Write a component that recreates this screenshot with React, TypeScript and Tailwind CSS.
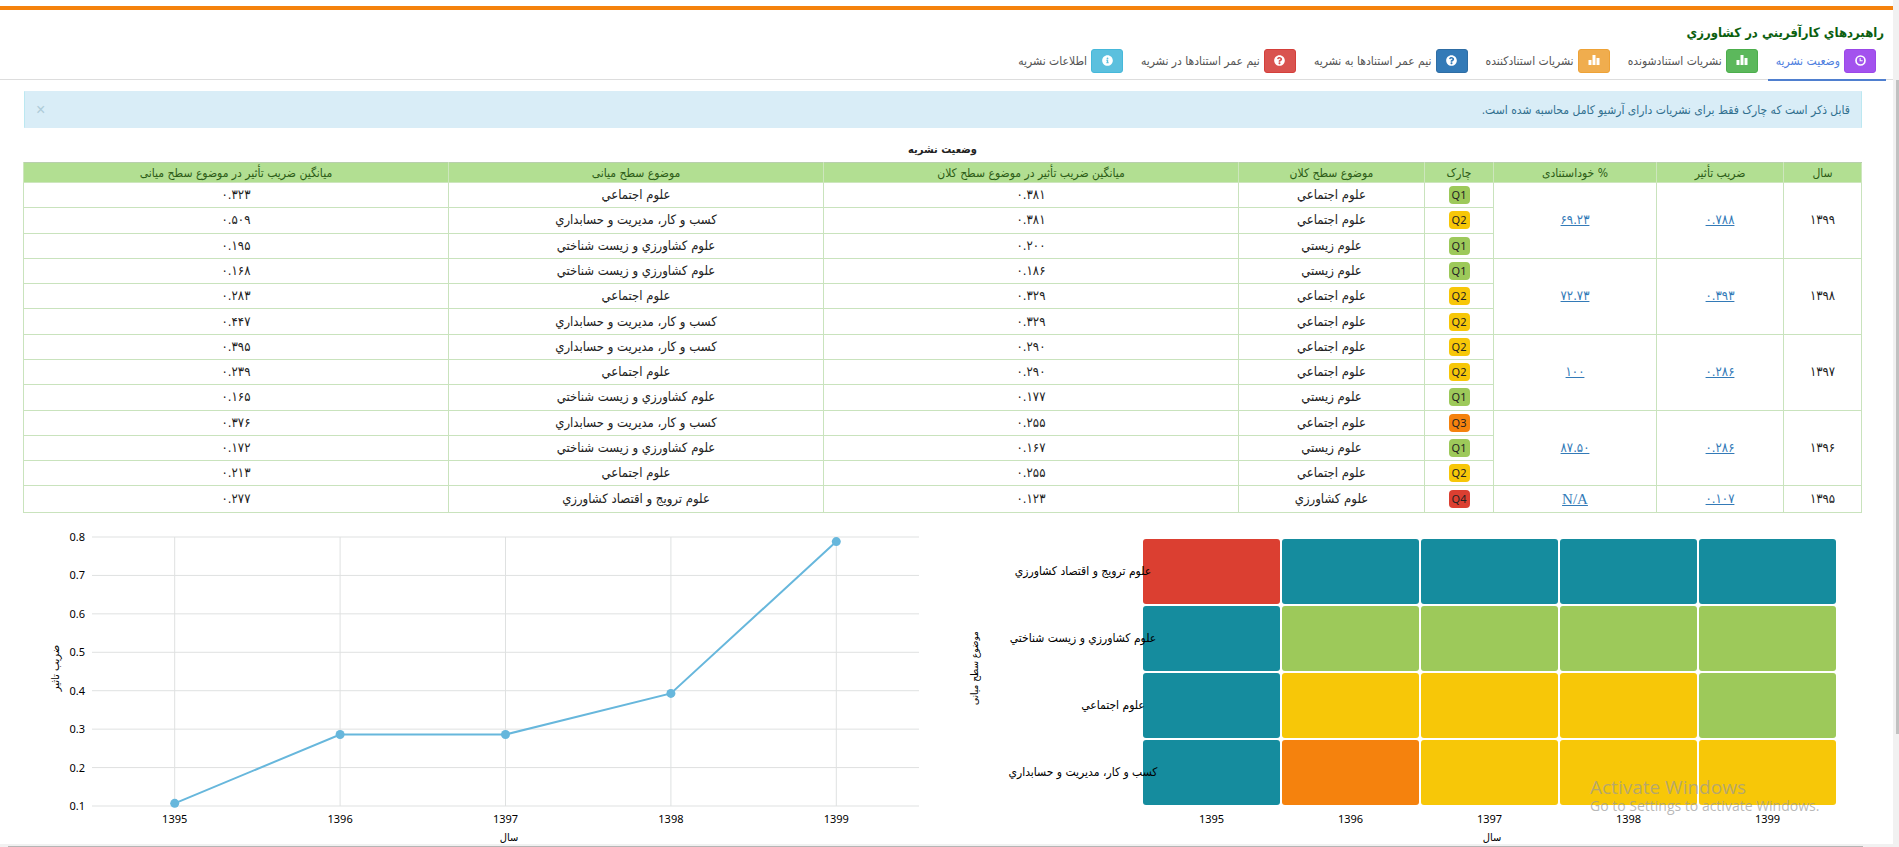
import type { ReactNode } from 'react';
import { clsx } from 'clsx';
import { FaInfoCircle, FaQuestionCircle } from 'react-icons/fa';

type Quartile = 'Q1' | 'Q2' | 'Q3' | 'Q4';

type Subject = {
  quartile: Quartile;
  macro: string;
  macroMean: string;
  mid: string;
  midMean: string;
};

type YearGroup = {
  year: string;
  impact: string;
  selfCitation: string;
  subjects: Subject[];
};

type Tab = {
  label: string;
  icon: ReactNode;
  color: string;
  active?: boolean;
};

const SOCIAL = 'علوم اجتماعي';
const BIO = 'علوم زيستي';
const AGRI = 'علوم کشاورزي';
const BUSINESS = 'کسب و کار، مديريت و حسابداري';
const AGRI_BIO = 'علوم کشاورزي و زيست شناختي';
const EXTENSION = 'علوم ترويج و اقتصاد کشاورزي';

const years: YearGroup[] = [
  {
    year: '۱۳۹۹',
    impact: '۰.۷۸۸',
    selfCitation: '۶۹.۲۳',
    subjects: [
      { quartile: 'Q1', macro: SOCIAL, macroMean: '۰.۳۸۱', mid: SOCIAL, midMean: '۰.۳۲۳' },
      { quartile: 'Q2', macro: SOCIAL, macroMean: '۰.۳۸۱', mid: BUSINESS, midMean: '۰.۵۰۹' },
      { quartile: 'Q1', macro: BIO, macroMean: '۰.۲۰۰', mid: AGRI_BIO, midMean: '۰.۱۹۵' },
    ],
  },
  {
    year: '۱۳۹۸',
    impact: '۰.۳۹۳',
    selfCitation: '۷۲.۷۳',
    subjects: [
      { quartile: 'Q1', macro: BIO, macroMean: '۰.۱۸۶', mid: AGRI_BIO, midMean: '۰.۱۶۸' },
      { quartile: 'Q2', macro: SOCIAL, macroMean: '۰.۳۲۹', mid: SOCIAL, midMean: '۰.۲۸۳' },
      { quartile: 'Q2', macro: SOCIAL, macroMean: '۰.۳۲۹', mid: BUSINESS, midMean: '۰.۴۴۷' },
    ],
  },
  {
    year: '۱۳۹۷',
    impact: '۰.۲۸۶',
    selfCitation: '۱۰۰',
    subjects: [
      { quartile: 'Q2', macro: SOCIAL, macroMean: '۰.۲۹۰', mid: BUSINESS, midMean: '۰.۳۹۵' },
      { quartile: 'Q2', macro: SOCIAL, macroMean: '۰.۲۹۰', mid: SOCIAL, midMean: '۰.۲۳۹' },
      { quartile: 'Q1', macro: BIO, macroMean: '۰.۱۷۷', mid: AGRI_BIO, midMean: '۰.۱۶۵' },
    ],
  },
  {
    year: '۱۳۹۶',
    impact: '۰.۲۸۶',
    selfCitation: '۸۷.۵۰',
    subjects: [
      { quartile: 'Q3', macro: SOCIAL, macroMean: '۰.۲۵۵', mid: BUSINESS, midMean: '۰.۳۷۶' },
      { quartile: 'Q1', macro: BIO, macroMean: '۰.۱۶۷', mid: AGRI_BIO, midMean: '۰.۱۷۲' },
      { quartile: 'Q2', macro: SOCIAL, macroMean: '۰.۲۵۵', mid: SOCIAL, midMean: '۰.۲۱۳' },
    ],
  },
  {
    year: '۱۳۹۵',
    impact: '۰.۱۰۷',
    selfCitation: 'N/A',
    subjects: [
      { quartile: 'Q4', macro: AGRI, macroMean: '۰.۱۲۳', mid: EXTENSION, midMean: '۰.۲۷۷' },
    ],
  },
];

const columns = [
  { label: 'سال', width: 'w-[78px]' },
  { label: 'ضریب تأثیر', width: 'w-[127px]' },
  { label: '% خوداستنادی', width: 'w-[163px]' },
  { label: 'چارک', width: 'w-[69px]' },
  { label: 'موضوع سطح کلان', width: 'w-[186px]' },
  { label: 'میانگین ضریب تأثیر در موضوع سطح کلان', width: 'w-[415px]' },
  { label: 'موضوع سطح میانی', width: 'w-[375px]' },
  { label: 'میانگین ضریب تأثیر در موضوع سطح میانی', width: 'w-[425px]' },
];

const badgeColors: Record<Quartile, string> = {
  Q1: 'bg-[#9dc95a]',
  Q2: 'bg-[#f7c708]',
  Q3: 'bg-[#f5820d]',
  Q4: 'bg-[#db3f31]',
};

const chartYears = ['1395', '1396', '1397', '1398', '1399'];
const impactValues = [0.107, 0.286, 0.286, 0.393, 0.788];

// Heat map rows, top to bottom. null means the journal was not ranked that year.
const heatRows: { label: string; labelX: number; cells: (Quartile | null)[] }[] = [
  { label: EXTENSION, labelX: 140, cells: ['Q4', null, null, null, null] },
  { label: AGRI_BIO, labelX: 140, cells: [null, 'Q1', 'Q1', 'Q1', 'Q1'] },
  { label: SOCIAL, labelX: 170, cells: [null, 'Q2', 'Q2', 'Q2', 'Q1'] },
  { label: BUSINESS, labelX: 140, cells: [null, 'Q3', 'Q2', 'Q2', 'Q2'] },
];

const heatFills: Record<Quartile, string> = {
  Q1: 'fill-[#9dc95a]',
  Q2: 'fill-[#f7c708]',
  Q3: 'fill-[#f5820d]',
  Q4: 'fill-[#db3f31]',
};

function ClockIcon() {
  return (
    <svg viewBox="0 0 12 12" className="size-[11px]" fill="none" stroke="currentColor" aria-hidden="true">
      <circle cx="6" cy="6" r="4.9" strokeWidth="1.8" />
      <path d="M5.6 3.2V6.3H8.4" strokeWidth="1.1" />
    </svg>
  );
}

function StatsIcon() {
  return (
    <svg viewBox="0 0 12 12" className="size-3" fill="currentColor" aria-hidden="true">
      <path d="M.5 6h3v5h-3zM4.5 1h3v10h-3zM8.5 4h3v7h-3z" />
    </svg>
  );
}

const tabs: Tab[] = [
  {
    label: 'وضعیت نشریه',
    icon: <ClockIcon />,
    color: 'bg-[#a352ee] border-[#9b48e8]',
    active: true,
  },
  { label: 'نشریات استنادشونده', icon: <StatsIcon />, color: 'bg-[#5cb85c] border-[#4cae4c]' },
  { label: 'نشریات استنادکننده', icon: <StatsIcon />, color: 'bg-[#f0ad4e] border-[#eea236]' },
  {
    label: 'نیم عمر استنادها به نشریه',
    icon: <FaQuestionCircle className="size-[11px]" />,
    color: 'bg-[#337ab7] border-[#2e6da4]',
  },
  {
    label: 'نیم عمر استنادها در نشریه',
    icon: <FaQuestionCircle className="size-[11px]" />,
    color: 'bg-[#d9534f] border-[#d43f3a]',
  },
  {
    label: 'اطلاعات نشریه',
    icon: <FaInfoCircle className="size-[11px]" />,
    color: 'bg-[#5bc0de] border-[#46b8da]',
  },
];

function TabBar() {
  return (
    <nav className="mt-1 flex border-b border-[#ddd] px-[7px]">
      {tabs.map((tab) => (
        <a
          key={tab.label}
          href="#"
          className={clsx(
            '-mb-[2px] flex items-center gap-1 border-b-2 pb-1.5 pl-2 pr-[10px] text-xs',
            tab.active ? 'border-[#4f7fcf] text-[#4f7fe0]' : 'border-transparent text-[#555]'
          )}
        >
          <span
            className={clsx(
              'flex h-6 w-8 items-center justify-center rounded-[3px] border pb-0.5 text-white',
              tab.color
            )}
          >
            {tab.icon}
          </span>
          {tab.label}
        </a>
      ))}
    </nav>
  );
}

function StatusTable() {
  return (
    <table className="h-[351px] w-full table-fixed border-collapse text-center text-[13px] leading-[18px] text-[#222]">
      <caption className="pb-0.5 text-[11px] font-bold leading-5">وضعیت نشریه</caption>
      <thead>
        <tr className="h-5 bg-[#b2df92] text-xs leading-4 text-[#2d5c17]">
          {columns.map((column) => (
            <th
              key={column.label}
              className={clsx('border border-[#cde6bd] border-t-[#b9cfae] p-0 font-normal', column.width)}
            >
              {column.label}
            </th>
          ))}
        </tr>
      </thead>
      <tbody>
        {years.map((group) =>
          group.subjects.map((subject, index) => (
            <tr key={`${group.year}-${index}`} className="*:border *:border-[#c9e3bd] *:p-0">
              {index === 0 && (
                <>
                  <td rowSpan={group.subjects.length}>{group.year}</td>
                  <td rowSpan={group.subjects.length}>
                    <a href="#" className="text-[#337ab7] underline">
                      {group.impact}
                    </a>
                  </td>
                  <td rowSpan={group.subjects.length}>
                    <a
                      href="#"
                      className={clsx(
                        'text-[#337ab7] underline',
                        group.selfCitation === 'N/A' && "font-['Liberation_Serif',serif] text-[15px]"
                      )}
                    >
                      {group.selfCitation}
                    </a>
                  </td>
                </>
              )}
              <td>
                <span
                  className={clsx(
                    "mx-auto block h-[18px] w-[21px] rounded-[4px] font-['Noto_Sans','DejaVu_Sans',sans-serif] text-[11px]",
                    badgeColors[subject.quartile]
                  )}
                >
                  {subject.quartile}
                </span>
              </td>
              <td>{subject.macro}</td>
              <td>{subject.macroMean}</td>
              <td>{subject.mid}</td>
              <td>{subject.midMean}</td>
            </tr>
          ))
        )}
      </tbody>
    </table>
  );
}

const TOP = 24;
const BOTTOM = 293;

function ImpactChart() {
  const left = 68;
  const right = 895;
  const step = (right - left) / chartYears.length;
  const xAt = (i: number) => left + step * (i + 0.5);
  const yAt = (value: number) => BOTTOM - ((value - 0.1) / 0.7) * (BOTTOM - TOP);
  const ticks = [0.8, 0.7, 0.6, 0.5, 0.4, 0.3, 0.2, 0.1];

  return (
    <svg viewBox="0 0 919 331" direction="ltr" className="min-w-0 flex-1 text-[11px]">
      <g className="stroke-[#dfe1e1]">
        {ticks.map((tick) => (
          <line key={tick} x1={left} x2={right} y1={yAt(tick)} y2={yAt(tick)} />
        ))}
        {chartYears.map((year, i) => (
          <line key={year} x1={xAt(i)} x2={xAt(i)} y1={TOP} y2={BOTTOM} />
        ))}
      </g>
      <g className="font-['Noto_Sans',sans-serif] text-[11px]">
        {ticks.map((tick) => (
          <text key={tick} x="61" y={yAt(tick) + 4} textAnchor="end">
            {tick.toFixed(1)}
          </text>
        ))}
        {chartYears.map((year, i) => (
          <text key={year} x={xAt(i)} y="310" textAnchor="middle">
            {year}
          </text>
        ))}
      </g>
      <polyline
        points={impactValues.map((value, i) => `${xAt(i)},${yAt(value)}`).join(' ')}
        fill="none"
        strokeWidth="2"
        className="stroke-[#67b7dc]"
      />
      {impactValues.map((value, i) => (
        <circle key={chartYears[i]} cx={xAt(i)} cy={yAt(value)} r="4.5" className="fill-[#67b7dc]" />
      ))}
      <text transform="translate(35 155) rotate(-90)" textAnchor="middle">
        ضریب تاثیر
      </text>
      <text x="485" y="328" textAnchor="middle">
        سال
      </text>
    </svg>
  );
}

function QuartileHeatMap() {
  const left = 199;
  const cellWidth = 139;
  const cellHeight = 67;
  const top = 25;

  return (
    <svg viewBox="0 0 919 331" direction="ltr" className="min-w-0 flex-1 text-[12px]">
      {heatRows.map((row, r) =>
        row.cells.map((cell, c) => (
          <rect
            key={`${row.label}-${chartYears[c]}`}
            x={left + c * cellWidth + 1}
            y={top + r * cellHeight + 1}
            width={cellWidth - 2}
            height={cellHeight - 2}
            rx="3"
            className={cell ? heatFills[cell] : 'fill-[#158c9e]'}
          />
        ))
      )}
      {heatRows.map((row, r) => (
        <text key={row.label} x={row.labelX} y={top + r * cellHeight + 37} textAnchor="middle">
          {row.label}
        </text>
      ))}
      <g className="font-['Noto_Sans',sans-serif] text-[11px]">
        {chartYears.map((year, c) => (
          <text key={year} x={left + (c + 0.5) * cellWidth} y="310" textAnchor="middle">
            {year}
          </text>
        ))}
      </g>
      <text transform="translate(35 155) rotate(-90)" textAnchor="middle" className="text-[10px]">
        موضوع سطح میانی
      </text>
      <text x="549" y="328" textAnchor="middle" className="text-[11px]">
        سال
      </text>
    </svg>
  );
}

export default function App() {
  return (
    <div className="relative flex h-screen flex-col overflow-hidden bg-white font-['DejaVu_Sans_Condensed','DejaVu_Sans',sans-serif]">
      <div className="flex min-h-0 flex-1">
        <div dir="rtl" className="min-w-0 flex-1 overflow-hidden pt-1.5">
          <div className="h-1 bg-[#f5820d]" />
          <h1 className="mt-[11px] pr-[9px] text-[13px] font-bold leading-6 text-[#0b6010]">
            راهبردهاي کارآفريني در کشاورزي
          </h1>
          <TabBar />
          <main className="pl-6 pr-[31px] pt-[11px]">
            <div
              role="alert"
              className="mb-3 flex h-[37px] items-center justify-between border border-[#bce8f1] border-y-[#d9edf7] bg-[#d9edf7] px-[11px] text-xs text-[#31708f]"
            >
              قابل ذکر است که چارک فقط برای نشریات دارای آرشیو کامل محاسبه شده است.
              <button
                type="button"
                aria-label="بستن"
                className="font-['Liberation_Sans',sans-serif] text-base text-[#aecbd8]"
              >
                ×
              </button>
            </div>
            <StatusTable />
            <div dir="ltr" className="flex">
              <ImpactChart />
              <QuartileHeatMap />
            </div>
          </main>
        </div>
        <div className="flex w-1.5 justify-end bg-[#f1f1f1] pb-[110px] pt-20">
          <div className="w-[3px] bg-[#c1c1c1]" />
        </div>
      </div>
      <div className="h-[3px] bg-[#f1f1f1] pl-2 pr-9 pt-0.5">
        <div className="h-px bg-[#b5b5b5]" />
      </div>
      <div className="pointer-events-none absolute bottom-8 right-[72px] w-[237px] font-['Open_Sans',sans-serif] text-[#999]/70">
        <p className="text-[19px] leading-5">Activate Windows</p>
        <p className="whitespace-nowrap text-[14px] leading-[18px]">Go to Settings to activate Windows.</p>
      </div>
    </div>
  );
}
